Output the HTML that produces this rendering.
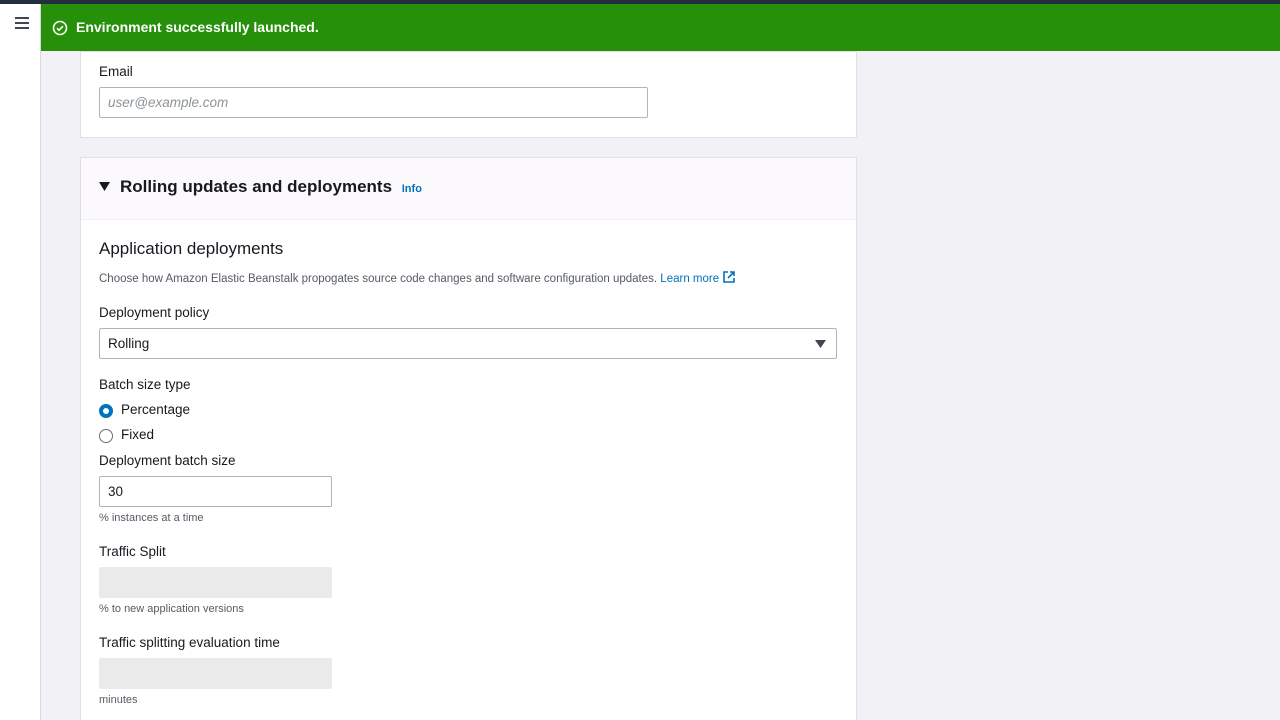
<!DOCTYPE html>
<html><head><style>
*{box-sizing:border-box;margin:0;padding:0}
html,body{width:1280px;height:720px;overflow:hidden}
body{background:#f2f1f6;font-family:"Liberation Sans",sans-serif;color:#16191f;position:relative}
.top{position:absolute;left:0;top:0;width:1280px;height:4px;background:#232f3e}
.side{position:absolute;left:0;top:4px;width:41px;height:716px;background:#fff;border-right:1px solid #d5dbdb}
.ham{position:absolute;left:15px;top:13px;width:14px}
.ham i{display:block;height:2px;background:#414750;margin-bottom:3px}
.flash{position:absolute;left:41px;top:4px;width:1239px;height:47px;background:#26900a;color:#fff;font-size:14px;font-weight:bold}
.flash span{position:absolute;left:35px;top:15px}
.card{position:absolute;left:80px;background:#fff;border:1px solid #e0e0e4;width:777px}
.lbl{position:absolute;left:99px;font-size:13.5px;color:#16191f}
.inp{position:absolute;left:99px;border:1px solid #aab7b8;border-radius:2px;background:#fff;font-size:13.5px;padding-left:8px}
.hint{position:absolute;left:99px;font-size:11px;color:#545b64}
.dis{position:absolute;left:99px;width:233px;height:31px;background:#eaeaea;border-radius:2px}
</style></head><body>
<div class="top"></div>
<div class="side"><div class="ham"><i></i><i></i><i></i></div></div>
<div class="card" style="top:51px;height:87px"></div>
<div class="card" style="top:157px;height:570px"><div style="height:62px;background:#fbf9fc;border-bottom:1px solid #f0eef3"></div></div>
<div class="flash"><svg style="position:absolute;left:11px;top:16px" width="16" height="16" viewBox="0 0 16 16"><circle cx="8" cy="8" r="6.5" fill="none" stroke="#fff" stroke-width="1.6"/><path d="M5 8.2l2 2 4-4" fill="none" stroke="#fff" stroke-width="1.6"/></svg><span>Environment successfully launched.</span></div>
<div class="lbl" style="top:64px">Email</div>
<div class="inp" style="top:87px;width:549px;height:31px;line-height:29px;color:#8d9499;font-style:italic">user@example.com</div>
<svg style="position:absolute;left:99px;top:182px" width="11" height="9" viewBox="0 0 11 9"><path d="M0 0h11L5.5 9z" fill="#16191f"/></svg>
<div style="position:absolute;left:120px;top:177px;font-size:17px;font-weight:bold">Rolling updates and deployments <span style="font-size:11px;color:#0073bb;margin-left:5px">Info</span></div>
<div style="position:absolute;left:99px;top:239px;font-size:17px">Application deployments</div>
<div class="hint" style="top:270px;font-size:11.5px">Choose how Amazon Elastic Beanstalk propogates source code changes and software configuration updates. <span style="color:#0073bb">Learn more</span> <svg width="14" height="14" viewBox="0 0 14 14" style="vertical-align:-2px"><path d="M6 2H2v10h10V8M8 2h4v4M12 2L6 8" fill="none" stroke="#0073bb" stroke-width="1.6"/></svg></div>
<div class="lbl" style="top:305px">Deployment policy</div>
<div class="inp" style="top:328px;width:738px;height:31px;line-height:29px">Rolling<svg style="position:absolute;right:10px;top:11px" width="11" height="8" viewBox="0 0 11 8"><path d="M0 0h11L5.5 8z" fill="#414750"/></svg></div>
<div class="lbl" style="top:377px">Batch size type</div>
<div style="position:absolute;left:99px;top:404px;width:14px;height:14px;border-radius:50%;border:4px solid #0073bb"></div>
<div class="lbl" style="top:402px;left:121px">Percentage</div>
<div style="position:absolute;left:99px;top:429px;width:14px;height:14px;border-radius:50%;border:1px solid #687078"></div>
<div class="lbl" style="top:427px;left:121px">Fixed</div>
<div class="lbl" style="top:453px">Deployment batch size</div>
<div class="inp" style="top:476px;width:233px;height:31px;line-height:29px">30</div>
<div class="hint" style="top:512px">% instances at a time</div>
<div class="lbl" style="top:544px">Traffic Split</div>
<div class="dis" style="top:567px"></div>
<div class="hint" style="top:603px">% to new application versions</div>
<div class="lbl" style="top:635px">Traffic splitting evaluation time</div>
<div class="dis" style="top:658px"></div>
<div class="hint" style="top:694px">minutes</div>
</body></html>
